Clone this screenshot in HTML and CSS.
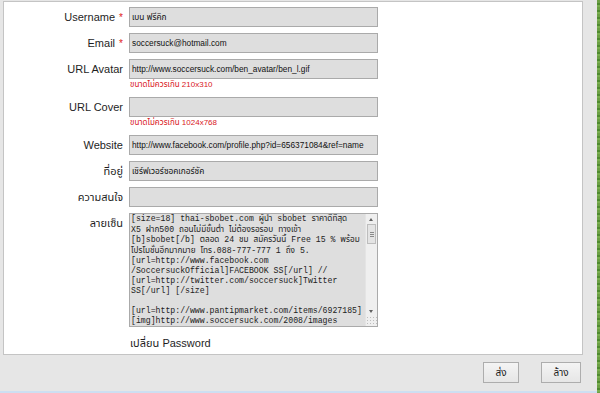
FILE: index.html
```html
<!DOCTYPE html>
<html lang="th">
<head>
<meta charset="utf-8">
<title>Profile</title>
<link rel="stylesheet" href="styles.css">
</head>
<body>
<div class="page">
  <div class="main">
    <div class="panel">
      <form class="form">
        <label class="lbl">Username <span class="req">*</span></label>
        <div class="field"><div class="input">เบน ฟรีคิก</div></div>

        <label class="lbl">Email <span class="req">*</span></label>
        <div class="field"><div class="input">soccersuck@hotmail.com</div></div>

        <label class="lbl">URL Avatar</label>
        <div class="field">
          <div class="input">http://www.soccersuck.com/ben_avatar/ben_l.gif</div>
          <div class="note">ขนาดไม่ควรเกิน 210x310</div>
        </div>

        <label class="lbl">URL Cover</label>
        <div class="field">
          <div class="input"></div>
          <div class="note">ขนาดไม่ควรเกิน 1024x768</div>
        </div>

        <label class="lbl">Website</label>
        <div class="field"><div class="input">http://www.facebook.com/profile.php?id=656371084&amp;ref=name</div></div>

        <label class="lbl">ที่อยู่</label>
        <div class="field"><div class="input">เชิร์ฟเวอร์ซอคเกอร์ซัค</div></div>

        <label class="lbl">ความสนใจ</label>
        <div class="field"><div class="input"></div></div>

        <label class="lbl">ลายเซ็น</label>
        <div class="field">
          <div class="textarea">
            <div class="ta-text"><div class="th">[size=18] thai-sbobet.com ผู้นำ sbobet ราคาดีที่สุด</div><div class="th">X5 ฝาก500 ถอนไม่มีขั้นต่ำ ไม่ต้องรอรอบ ทางเข้า</div><div class="th">[b]sbobet[/b] ตลอด 24 ชม สมัครวันนี้ Free 15 % พร้อม</div><div class="th">โปรโมชั่นอีกมากมาย โทร.088-777-777 1 ถึง 5.</div><div>[url=http://www.facebook.com</div><div>/SoccersuckOfficial]FACEBOOK SS[/url] //</div><div>[url=http://twitter.com/soccersuck]Twitter</div><div>SS[/url] [/size]</div><div>&nbsp;</div><div>[url=http://www.pantipmarket.com/items/6927185]</div><div>[img]http://www.soccersuck.com/2008/images</div></div>
            <div class="sb">
              <div class="sb-up"></div>
              <div class="sb-thumb"><span></span><span></span><span></span></div>
              <div class="sb-track"></div>
              <div class="sb-down"></div>
              <div class="sb-grip"></div>
            </div>
          </div>
        </div>

        <div class="spacer"></div>
        <div class="field"><div class="link">เปลี่ยน Password</div></div>
      </form>
    </div>
    <div class="footer">
      <button type="button" class="btn btn-send">ส่ง</button>
      <button type="button" class="btn btn-clear">ล้าง</button>
    </div>
    <div class="blueline"></div>
  </div>
  <div class="green"></div>
</div>
</body>
</html>
```

FILE: styles.css
```css
html, body {
  margin: 0;
  padding: 0;
}
body {
  background: #e6e6e6;
  font-family: "Liberation Sans", Tahoma, "Noto Sans Thai", sans-serif;
  color: #1a1a1a;
  width: 600px;
  height: 393px;
  overflow: hidden;
}
.page {
  display: flex;
  height: 393px;
}
.main {
  width: 597px;
  display: flex;
  flex-direction: column;
}
.green {
  width: 3px;
  background: repeating-linear-gradient(180deg, #6c9f45 0 3px, #4f8a30 3px 5px, #7aae50 5px 7px);
}
.panel {
  margin: 1px 0 0 3px;
  width: 578px;
  height: 352px;
  background: #ffffff;
  border: 1px solid #c4c4c4;
}
.form {
  display: grid;
  grid-template-columns: 119px 249px;
  column-gap: 6px;
  row-gap: 6px;
  padding-top: 5px;
  align-items: start;
}
.lbl {
  text-align: right;
  font-size: 11px;
  line-height: 20px;
  height: 20px;
  color: #1e1e1e;
  white-space: nowrap;
}
.req {
  color: #e02020;
  font-size: 10px;
  margin-left: 1px;
}
.field {
  display: flex;
  flex-direction: column;
}
.input {
  box-sizing: border-box;
  height: 20px;
  border: 1px solid #aaaaaa;
  background: #dedede;
  font-size: 8.3px;
  line-height: 18px;
  padding-left: 2px;
  color: #111;
  white-space: nowrap;
  overflow: hidden;
}
.note {
  font-size: 8px;
  line-height: 12px;
  color: #d9161c;
  padding-left: 1px;
}
.textarea {
  box-sizing: border-box;
  height: 114px;
  border: 1px solid #aaaaaa;
  background: #dedede;
  display: flex;
  overflow: hidden;
}
.ta-text {
  flex: 1;
  font-family: "Liberation Mono", "Courier New", "Noto Sans Thai", monospace;
  font-size: 8.2px;
  line-height: 10px;
  padding: 0 0 0 1px;
  color: #222;
  white-space: pre;
  overflow: hidden;
}
.ta-text .th {
  line-height: 10.5px;
}
.sb {
  width: 11px;
  background: #efefef;
  border-left: 1px solid #e4e4e4;
  display: flex;
  flex-direction: column;
  align-items: center;
}
.sb-up, .sb-down {
  height: 10px;
  width: 11px;
  position: relative;
}
.sb-up::after, .sb-down::after {
  content: "";
  position: absolute;
  left: 3px;
  border-left: 2.5px solid transparent;
  border-right: 2.5px solid transparent;
}
.sb-up::after {
  top: 4px;
  border-bottom: 3px solid #606060;
}
.sb-down::after {
  top: 4px;
  border-top: 3px solid #606060;
}
.sb-thumb {
  box-sizing: border-box;
  width: 9px;
  height: 20px;
  border: 1px solid #bdbdbd;
  background: #e4e4e4;
  display: flex;
  flex-direction: column;
  justify-content: center;
  align-items: center;
  gap: 1px;
}
.sb-thumb span {
  width: 4px;
  height: 1px;
  background: #8a8a8a;
}
.sb-track {
  flex: 1;
}
.sb-grip {
  height: 10px;
  width: 11px;
  background: radial-gradient(circle, #b0b0b0 0.6px, transparent 0.8px) 0 0 / 3px 3px;
  opacity: 0.8;
}
.spacer {
  height: 20px;
}
.link {
  font-size: 11px;
  line-height: 20px;
  padding-left: 1px;
  color: #1e1e1e;
}
.footer {
  height: 36px;
  box-sizing: border-box;
  padding: 7px 16px 0 0;
  display: flex;
  justify-content: flex-end;
  align-items: flex-start;
  gap: 22px;
}
.btn {
  height: 21px;
  box-sizing: border-box;
  border: 1px solid #adadad;
  background: linear-gradient(#f4f4f4, #e6e6e6);
  font-family: "Liberation Sans", Tahoma, "Noto Sans Thai", sans-serif;
  font-size: 10px;
  color: #222;
  padding: 0;
  margin: 0;
}
.btn-send {
  width: 36px;
}
.btn-clear {
  width: 40px;
}
.blueline {
  height: 2px;
  background: #cddff2;
}
```
